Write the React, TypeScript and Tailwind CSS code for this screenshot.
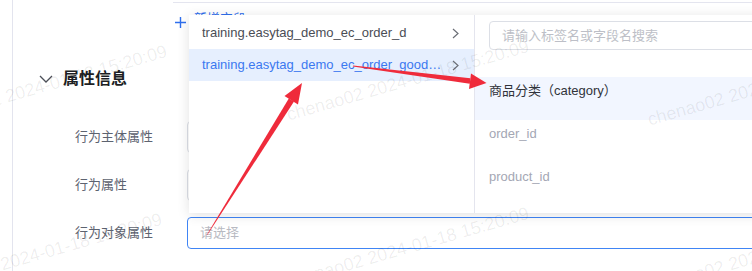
import React from "react";

const marks = [
  { left: -75, top: 110 },
  { left: 287, top: 105 },
  { left: 648, top: 110 },
  { left: -80, top: 278 },
  { left: 287, top: 272 },
  { left: 648, top: 278 },
];

const rows = [
  { label: "行为主体属性", active: false },
  { label: "行为属性", active: false },
  { label: "行为对象属性", active: true },
];

const Chevron = () => (
  <svg width="14" height="8" viewBox="0 0 14 8" fill="none">
    <polyline points="1,1 7,7 13,1" stroke="#4b4f58" strokeWidth="1.3" />
  </svg>
);

const RightArrow = () => (
  <svg width="7" height="11" viewBox="0 0 7 11" fill="none">
    <polyline points="1,1 6,5.5 1,10" stroke="#6b6e76" strokeWidth="1.2" />
  </svg>
);

export default function App() {
  return (
    <div className="relative w-[752px] h-[271px] overflow-hidden bg-white text-[13px] font-['Liberation_Sans','Noto_Sans_CJK_SC',sans-serif]">
      <div className="flex h-full">
        <div className="w-[12px] shrink-0" />
        <div className="flex-1 border-l border-[#e3e4ee] flex flex-col">
          {/* table bottom edge */}
          <div className="mt-[2px] ml-[160px] border-t border-[#e4e5ef]" />

          {/* add button, mostly covered by the dropdown */}
          <div className="mt-[9px] h-[20px] ml-[162px] flex items-start gap-[8px] text-[#2f6fed]">
            <svg width="11" height="11" viewBox="0 0 11 11" className="mt-[5px]">
              <path d="M5.5 0v11M0 5.5h11" stroke="#2f6fed" strokeWidth="1.4" />
            </svg>
            <span className="leading-[16px] -mt-[1px]">新增字段</span>
          </div>

          {/* section header */}
          <div className="mt-[35px] h-[24px] flex items-center pl-[26px]">
            <Chevron />
            <span className="ml-[10px] text-[16px] font-bold text-[#1d1f24]">属性信息</span>
          </div>

          {/* form rows */}
          <div className="mt-[30px] flex flex-col gap-[16px]">
            {rows.map((r) => (
              <div key={r.label} className="flex items-center h-[32px] pl-[62px]">
                <span className="w-[112px] shrink-0 text-[#5d6370]">{r.label}</span>
                <div
                  className={`w-[600px] shrink-0 h-[32px] rounded-[4px] border flex items-center pl-[12px] ${
                    r.active ? "border-[#4085f5]" : "border-[#dcdfe6]"
                  }`}
                >
                  <span className="text-[#b8bac2]">请选择</span>
                </div>
              </div>
            ))}
          </div>
        </div>
      </div>

      {/* cascader dropdown */}
      <div className="absolute left-[189px] top-[15px] w-[600px] h-[198px] bg-white flex shadow-[0_2px_12px_rgba(0,0,0,0.12)] z-10">
        <div className="w-[286px] shrink-0 border-r border-[#e4e5ee] pt-[2px]">
          <div className="h-[32px] flex items-center justify-between pl-[13px] pr-[15px] text-[#4a4d55]">
            <span className="truncate">training.easytag_demo_ec_order_d</span>
            <RightArrow />
          </div>
          <div className="h-[32px] flex items-center justify-between pl-[13px] pr-[15px] bg-[#e6effe] text-[#3b78f0]">
            <span className="truncate w-[245px]">training.easytag_demo_ec_order_goods_detail</span>
            <RightArrow />
          </div>
        </div>
        <div className="flex-1 flex flex-col">
          <div className="mt-[6px] ml-[14px] h-[29px] border border-[#dcdfe6] rounded-[4px] flex items-center pl-[12px]">
            <span className="text-[#bdbfc7]">请输入标签名或字段名搜索</span>
          </div>
          <div className="mt-[27px] h-[43px] bg-[#f2f6ff] pl-[14px] pt-[4px] leading-[20px] text-[#30333a]">
            商品分类（category）
          </div>
          <div className="h-[43px] pl-[14px] pt-[4px] leading-[20px] text-[#a4a7b4]">order_id</div>
          <div className="h-[43px] pl-[14px] pt-[4px] leading-[20px] text-[#a4a7b4]">product_id</div>
        </div>
      </div>

      {/* watermarks */}
      <div className="absolute inset-0 pointer-events-none z-20">
        {marks.map((m, i) => (
          <span
            key={i}
            className="absolute whitespace-nowrap text-[18px] leading-[20px] text-black/[0.07] origin-left -rotate-[16deg]"
            style={{ left: m.left, top: m.top }}
          >
            chenao02 2024-01-18 15:20:09
          </span>
        ))}
      </div>

      {/* annotation arrows */}
      <svg className="absolute inset-0 pointer-events-none z-30" width="752" height="271" viewBox="0 0 752 271">
        <polygon points="206.4,235.4 207.6,234.6 294,101.6 288.8,98.4" fill="#ef2b3b" />
        <polygon points="302,83 298,104.5 284.5,96" fill="#ef2b3b" />
        <polygon points="352.9,66.6 353.1,65.4 470.4,78.2 469.8,83.8" fill="#ef2b3b" />
        <polygon points="486.5,83 469,89 471,73.5" fill="#ef2b3b" />
      </svg>
    </div>
  );
}
